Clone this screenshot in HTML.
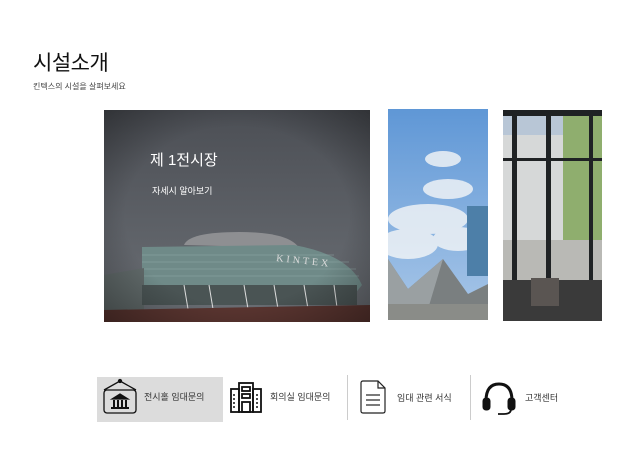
<!DOCTYPE html>
<html><head><meta charset="utf-8">
<style>
body{margin:0;width:619px;height:454px;background:#fff;position:relative;overflow:hidden;font-family:"Liberation Sans","Noto Sans CJK KR",sans-serif;}
.a{position:absolute;}
.t{font-size:11px;color:#333;}
</style></head><body>
<div class="a" style="left:33px;top:47px;font-size:21px;color:#111;letter-spacing:-0.5px">시설소개</div>
<div class="a" style="left:33px;top:81px;font-size:8px;color:#444">킨텍스의 시설을 살펴보세요</div>

<svg class="a" style="left:104px;top:110px" width="266" height="212" viewBox="0 0 266 212">
<defs>
<linearGradient id="sk" x1="0" y1="0" x2="0" y2="1"><stop offset="0" stop-color="#4c4f55"/><stop offset="1" stop-color="#6b6f75"/></linearGradient>
<radialGradient id="vg" cx="0.5" cy="0.5" r="0.7"><stop offset="0.6" stop-color="#000" stop-opacity="0"/><stop offset="1" stop-color="#000" stop-opacity="0.35"/></radialGradient>
</defs>
<rect width="266" height="212" fill="url(#sk)"/>
<path d="M80 135 Q85 122 135 122 Q185 122 195 138 Z" fill="#8e8f92"/>
<path d="M38 137 L190 135 Q245 145 258 175 L250 185 L38 190 Z" fill="#6f8a88"/>
<g stroke="#8fa8a6" stroke-width="0.6"><line x1="38" y1="145" x2="230" y2="145"/><line x1="38" y1="152" x2="245" y2="152"/><line x1="38" y1="159" x2="252" y2="159"/><line x1="38" y1="166" x2="255" y2="166"/></g>
<path d="M0 165 L40 158 L40 205 L0 205Z" fill="#5f6868"/>
<rect x="38" y="175" width="215" height="20" fill="#4a5454"/>
<g stroke="#ddd" stroke-width="1"><line x1="80" y1="175" x2="85" y2="205"/><line x1="105" y1="175" x2="110" y2="205"/><line x1="140" y1="175" x2="145" y2="205"/><line x1="170" y1="175" x2="175" y2="205"/><line x1="200" y1="175" x2="205" y2="205"/><line x1="230" y1="175" x2="234" y2="205"/></g>
<path d="M0 200 L266 195 L266 212 L0 212Z" fill="#5a3530"/>
<text x="172" y="151" font-size="10" fill="#ddd" font-family="Liberation Serif" letter-spacing="3" transform="rotate(6 172 151)">KINTEX</text>
<rect width="266" height="212" fill="url(#vg)"/>
<text x="46" y="55" font-size="15" fill="#fff" font-family="Liberation Sans,Noto Sans CJK KR,sans-serif">제 1전시장</text>
<text x="48" y="84" font-size="9" fill="#fff" font-family="Liberation Sans,Noto Sans CJK KR,sans-serif">자세시 알아보기</text>
</svg>

<svg class="a" style="left:388px;top:109px" width="100" height="211" viewBox="0 0 100 211">
<defs><linearGradient id="s2" x1="0" y1="0" x2="0" y2="1"><stop offset="0" stop-color="#5f97d6"/><stop offset="1" stop-color="#a9c7e8"/></linearGradient></defs>
<rect width="100" height="211" fill="url(#s2)"/>
<g fill="#eef2f6" opacity="0.85"><ellipse cx="55" cy="50" rx="18" ry="8"/><ellipse cx="60" cy="80" rx="25" ry="10"/><ellipse cx="40" cy="110" rx="40" ry="15"/><ellipse cx="20" cy="135" rx="30" ry="15"/><ellipse cx="70" cy="130" rx="25" ry="12"/></g>
<rect x="79" y="97" width="21" height="70" fill="#4d7fa8"/>
<path d="M0 150 L20 180 L55 150 L80 185 L100 175 L100 211 L0 211Z" fill="#7a7f80"/>
<path d="M0 150 L20 180 L55 150 L40 200 L0 200Z" fill="#9aa0a2"/>
<rect y="195" width="100" height="16" fill="#8a8c88"/>
</svg>

<svg class="a" style="left:503px;top:110px" width="99" height="211" viewBox="0 0 99 211">
<rect width="99" height="211" fill="#b8c6d6"/>
<rect x="0" y="25" width="60" height="120" fill="#d6d8d8"/>
<rect x="60" y="0" width="39" height="140" fill="#8fae6e"/>
<rect x="0" y="130" width="99" height="50" fill="#b9b9b5"/>
<g fill="#1f2224"><rect x="0" y="0" width="99" height="6"/><rect x="9" y="0" width="5" height="185"/><rect x="43" y="0" width="5" height="185"/><rect x="86" y="0" width="4" height="185"/><rect x="0" y="48" width="99" height="3"/></g>
<rect x="0" y="170" width="99" height="41" fill="#3a3a3a"/>
<rect x="28" y="168" width="28" height="28" fill="#5a5552"/>
</svg>

<div class="a" style="left:97px;top:377px;width:126px;height:45px;background:#dcdcdc"></div>
<div class="a" style="left:347px;top:375px;width:1px;height:45px;background:#ccc"></div>
<div class="a" style="left:470px;top:375px;width:1px;height:45px;background:#ccc"></div>

<svg class="a" style="left:103px;top:378px" width="34" height="36" viewBox="0 0 34 36" fill="none" stroke="#111" stroke-width="1.3">
<rect x="1" y="12" width="32" height="23" rx="3"/><path d="M1 12 L17 3 L33 12"/><circle cx="17" cy="3" r="1.5" fill="#111"/>
<path d="M9 21 L17 16 L25 21Z" fill="#111"/><g stroke-width="2"><line x1="11" y1="22" x2="11" y2="29"/><line x1="15" y1="22" x2="15" y2="29"/><line x1="19" y1="22" x2="19" y2="29"/><line x1="23" y1="22" x2="23" y2="29"/></g><line x1="8" y1="30" x2="26" y2="30" stroke-width="2"/>
</svg>
<div class="a t" style="left:144px;top:390px;font-size:9px">전시홀 임대문의</div>

<svg class="a" style="left:230px;top:382px" width="32" height="31" viewBox="0 0 32 31" fill="none" stroke="#111" stroke-width="1.8">
<rect x="9" y="1" width="14" height="29"/><rect x="1" y="7" width="8" height="23"/><rect x="23" y="7" width="8" height="23"/>
<rect x="12" y="5" width="8" height="4"/><rect x="12" y="12" width="8" height="4"/><rect x="12" y="20" width="8" height="10"/>
<g stroke-width="1.5"><line x1="4" y1="12" x2="4" y2="26" stroke-dasharray="2 2"/><line x1="27" y1="12" x2="27" y2="26" stroke-dasharray="2 2"/></g>
</svg>
<div class="a t" style="left:270px;top:390px;font-size:9px">회의실 임대문의</div>

<svg class="a" style="left:360px;top:380px" width="26" height="34" viewBox="0 0 26 34" fill="none" stroke="#222" stroke-width="1.2">
<path d="M1 3 Q1 1 3 1 L18 1 L25 8 L25 31 Q25 33 23 33 L3 33 Q1 33 1 31Z"/><path d="M18 1 L18 8 L25 8"/>
<line x1="6" y1="15" x2="20" y2="15"/><line x1="6" y1="20" x2="20" y2="20"/><line x1="6" y1="25" x2="20" y2="25"/>
</svg>
<div class="a t" style="left:397px;top:391px;font-size:9px">임대 관련 서식</div>

<svg class="a" style="left:482px;top:381px" width="34" height="35" viewBox="0 0 34 35" fill="none" stroke="#111">
<path d="M4 20 Q4 3 17 3 Q30 3 30 20" stroke-width="3"/>
<rect x="1" y="17" width="7" height="12" rx="3" fill="#111"/><rect x="26" y="17" width="7" height="12" rx="3" fill="#111"/>
<path d="M29 28 Q29 33 22 33 L16 33" stroke-width="1.8"/>
</svg>
<div class="a t" style="left:525px;top:391px;font-size:9px">고객센터</div>
</body></html>
